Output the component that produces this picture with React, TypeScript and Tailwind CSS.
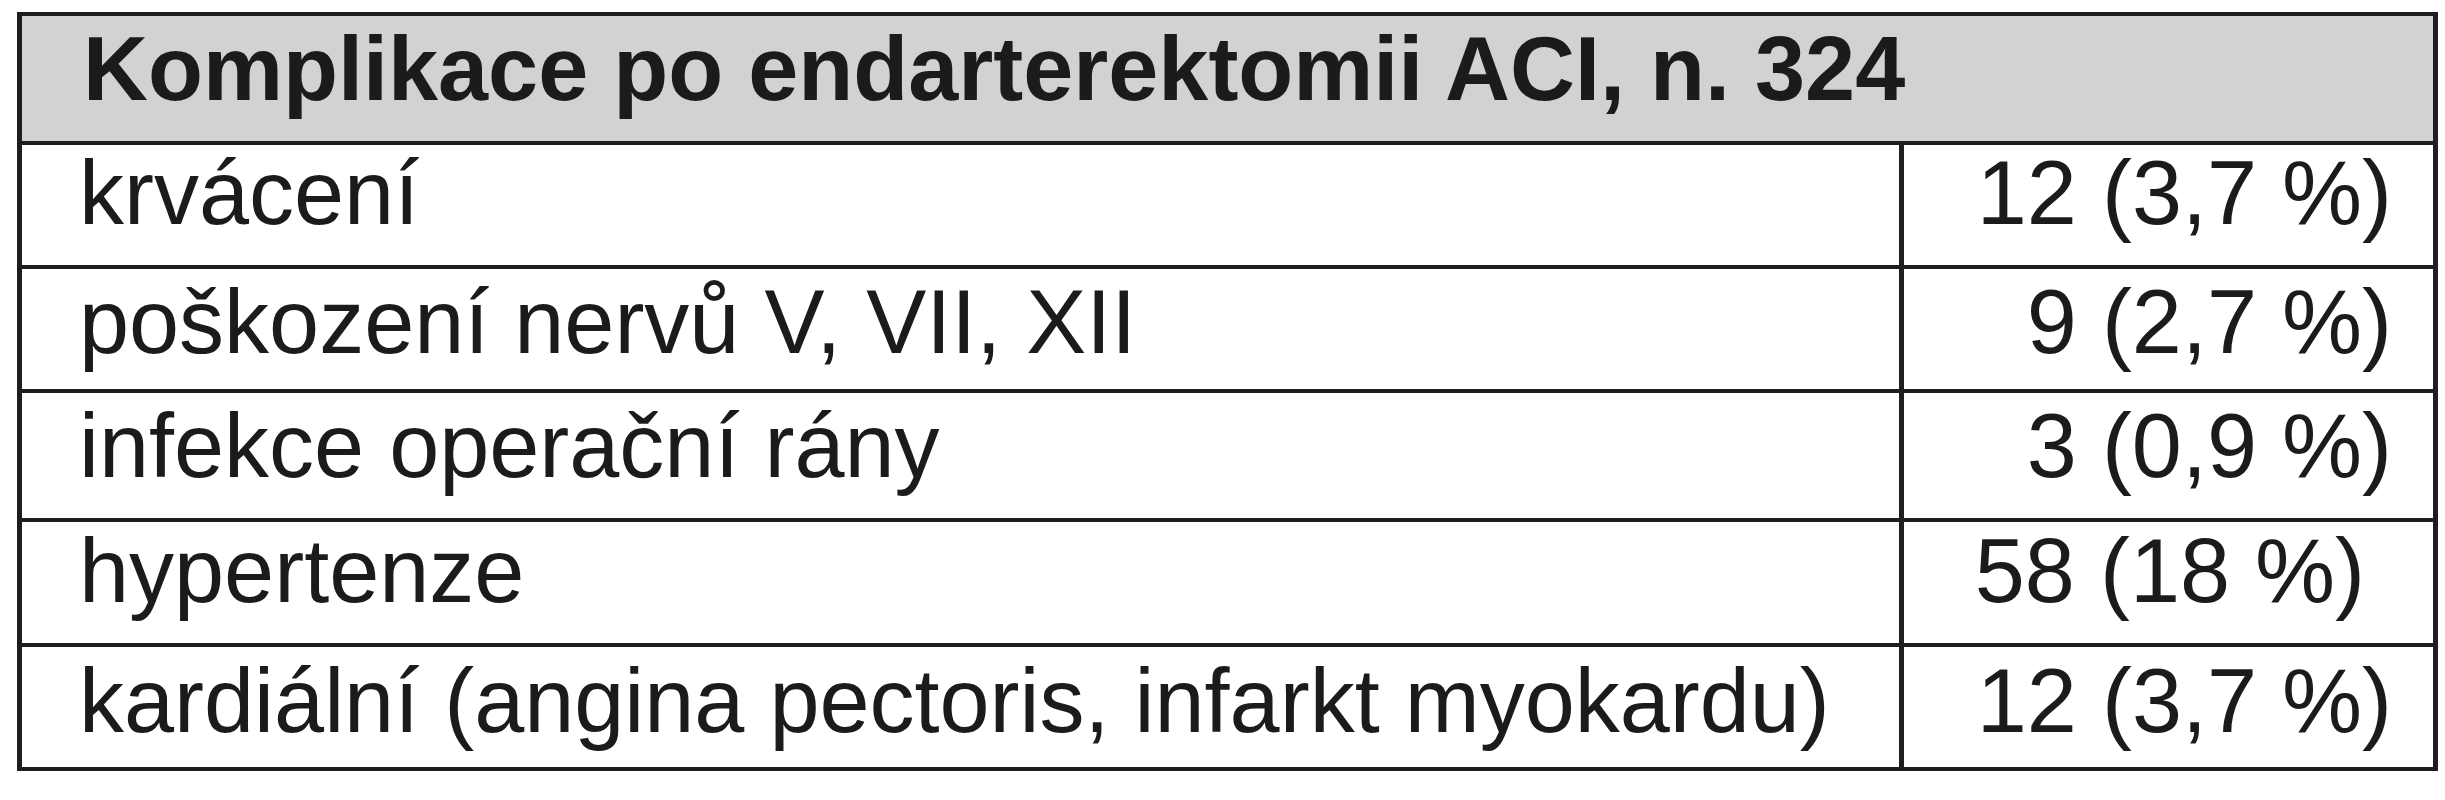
const rows = [
  { label: "krvácení", value: "12 (3,7 %)", h: "h-[124px]", pt: "pt-[3px]", pr: "pr-[41px]" },
  { label: "poškození nervů V, VII, XII", value: "9 (2,7 %)", h: "h-[124px]", pt: "pt-[8px]", pr: "pr-[41px]" },
  { label: "infekce operační rány", value: "3 (0,9 %)", h: "h-[129px]", pt: "pt-[8px]", pr: "pr-[41px]" },
  { label: "hypertenze", value: "58 (18 %)", h: "h-[125px]", pt: "pt-[4px]", pr: "pr-[68px]" },
  { label: "kardiální (angina pectoris, infarkt myokardu)", value: "12 (3,7 %)", h: "h-[124px]", pt: "pt-[9px]", pr: "pr-[41px]" },
];

export default function App() {
  return (
    <div className="min-h-[800px] w-[2445px] bg-white pt-[12px] pl-[17px] font-['Liberation_Sans',Arial,sans-serif] text-[90px] leading-none text-[#1b1b1b]">
      <div className="w-[2421px] border-x-[5px] border-t-4 border-[#1e1e1e]">
        <div className="h-[129px] border-b-4 border-[#1e1e1e] bg-[#d1d2d4] pl-[61px] pt-[8px] font-bold">
          Komplikace po endarterektomii ACI, n. 324
        </div>
        {rows.map((r) => (
          <div key={r.label} className={`flex ${r.h} border-b-4 border-[#1e1e1e]`}>
            <div className={`flex-1 pl-[57px] ${r.pt} whitespace-nowrap`}>{r.label}</div>
            <div className={`w-[534px] border-l-[5px] border-[#1e1e1e] text-right ${r.pt} ${r.pr} whitespace-nowrap`}>
              {r.value}
            </div>
          </div>
        ))}
      </div>
    </div>
  );
}
